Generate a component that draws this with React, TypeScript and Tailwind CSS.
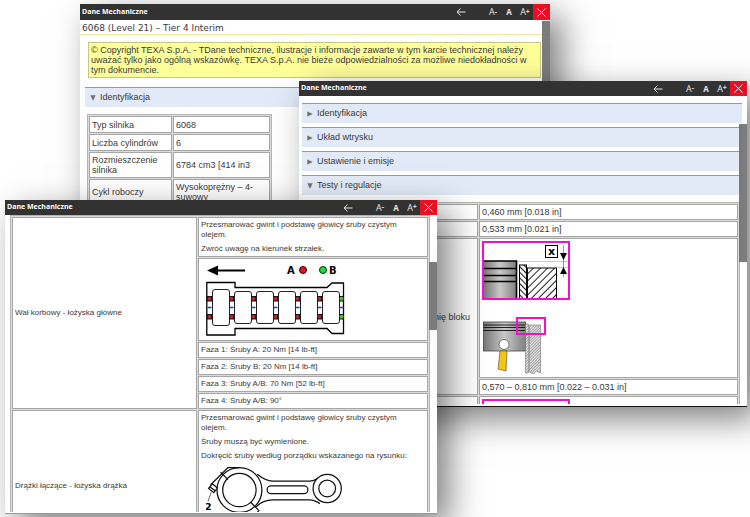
import type { ReactNode } from "react";

type WindowProps = {
  className: string;
  barClass: string;
  thumbClass: string;
  children: ReactNode;
};

const sans = "font-['Liberation_Sans',Arial,sans-serif]";
const cell = "border border-[#a6a6a6] bg-white px-[2px] py-0 text-left font-normal";
const grid = "border-separate border-spacing-[1px] border border-[#b4b4b4] bg-[#dcdcdc]";

function SizeButton({ label, mark, name }: { label: string; mark?: string; name: string }) {
  return (
    <button type="button" aria-label={name} className="flex w-4 shrink-0 items-center justify-center">
      <span className={mark ? "text-[9px]" : "text-[8px] font-bold"}>{label}</span>
      {mark && <span className="text-[7px] font-bold">{mark}</span>}
    </button>
  );
}

function AppWindow({ className, barClass, thumbClass, children }: WindowProps) {
  return (
    <section
      className={`absolute flex flex-col overflow-hidden bg-white shadow-[12px_12px_32px_rgba(0,0,0,0.5)] ${className}`}
    >
      <header className={`flex shrink-0 items-stretch bg-[#323232] font-['Open_Sans',sans-serif] text-[#e6e6e6] ${barClass}`}>
        <h2 className="flex flex-1 items-center pl-[2px] text-[7px] font-bold text-white">Dane Mechaniczne</h2>
        <button type="button" aria-label="Wstecz" className="mr-4 flex w-4 items-center justify-center">
          <svg viewBox="0 0 10 8" className="h-2 w-[10px]" fill="none" stroke="currentColor" strokeWidth="1">
            <path d="M9.5 4H1M4.500 .5 1 4l3.500 3.500" />
          </svg>
        </button>
        <SizeButton label="A" mark="-" name="Mniejszy tekst" />
        <SizeButton label="A" name="Zwykły tekst" />
        <SizeButton label="A" mark="+" name="Większy tekst" />
        <button type="button" aria-label="Zamknij" className="flex w-[17px] items-center justify-center bg-[#e81123] text-white">
          <svg viewBox="0 0 9 9" className="h-[9px] w-[9px]" fill="none" stroke="currentColor" strokeWidth="1">
            <path d="M.5 .5 8.500 8.500M8.500 .5 .5 8.500" />
          </svg>
        </button>
      </header>
      <div className={`relative min-h-0 flex-1 overflow-hidden text-[#3a3a3a] ${sans}`}>
        {children}
        <div className={`absolute right-0 w-2 bg-[#6e6e6e]/90 ${thumbClass}`} />
      </div>
    </section>
  );
}

function SectionBar({ title, open = false }: { title: string; open?: boolean }) {
  return (
    <button
      type="button"
      aria-expanded={open}
      className="flex h-5 w-full items-center gap-1 border-t border-[#9a9a9a] bg-[#e2eaf8] pl-[5px] text-left text-[9px]"
    >
      <svg viewBox="0 0 6 6" className="h-[6px] w-[6px] fill-[#6f6f6f]">
        <path d={open ? "M.3 .3h5.400L3 5.800z" : "M.3 .5 5.800 3 .3 5.500z"} />
      </svg>
      {title}
    </button>
  );
}

function IdentificationWindow() {
  const rows = [
    ["Typ silnika", "6068"],
    ["Liczba cylindrów", "6"],
    ["Rozmieszczenie silnika", "6784 cm3 [414 in3"],
    ["Cykl roboczy", "Wysokoprężny – 4-suwowy"],
  ];
  return (
    <AppWindow className="top-1 left-20 h-[240px] w-[470px]" barClass="h-4" thumbClass="top-px h-[150px]">
      <h1 className="h-[15px] border-b border-[#f3e2a0] pl-[2px] font-['DejaVu_Sans',sans-serif] text-[9px] leading-[16px]">
        6068 (Level 21) – Tier 4 Interim
      </h1>
      <p className="mt-[7px] mr-[9px] ml-2 border border-[#c5c58c] bg-[#ffff99] p-[2px] text-[9px] leading-[10px]">
        © Copyright TEXA S.p.A. - TDane techniczne, ilustracje i informacje zawarte w tym karcie technicznej należy
        uważać tylko jako ogólną wskazówkę. TEXA S.p.A. nie bieże odpowiedzialności za możliwe niedokładności w tym
        dokumencie.
      </p>
      <div className="mt-[9px] ml-[5px]">
        <SectionBar title="Identyfikacja" open />
      </div>
      <table className={`mt-[7px] ml-[7px] w-[185px] table-fixed text-[9px] leading-[10px] ${grid}`}>
        <colgroup>
          <col className="w-[83px]" />
          <col />
        </colgroup>
        <tbody>
          {rows.map(([name, value], i) => (
            <tr key={name} className={i < 2 ? "h-[17px]" : "h-[26px]"}>
              <th scope="row" className={cell}>{name}</th>
              <td className={cell}>{value}</td>
            </tr>
          ))}
        </tbody>
      </table>
    </AppWindow>
  );
}

function PistonDrawing() {
  return (
    <svg viewBox="0 0 88 134" className="block h-[134px] w-[88px]" role="img" aria-label="Tłok i blok silnika">
      <defs>
        <linearGradient id="metal" x1="0" x2="1">
          <stop offset="0" stopColor="#777" />
          <stop offset=".5" stopColor="#c9c9c9" />
          <stop offset="1" stopColor="#808080" />
        </linearGradient>
        <pattern id="hatch" width="5" height="5" patternUnits="userSpaceOnUse" patternTransform="rotate(45)">
          <rect width="5" height="5" fill="#fff" />
          <path d="M.5 0V5" stroke="#222" strokeWidth="1" />
        </pattern>
        <pattern id="hatchBack" width="4" height="4" patternUnits="userSpaceOnUse" patternTransform="rotate(-45)">
          <rect width="4" height="4" fill="#fff" />
          <path d="M.5 0V4" stroke="#222" strokeWidth="1.200" />
        </pattern>
        <pattern id="fine" width="2" height="2" patternUnits="userSpaceOnUse" patternTransform="rotate(45)">
          <rect width="2" height="2" fill="#eee" />
          <path d="M.5 0V2" stroke="#777" strokeWidth=".7" />
        </pattern>
      </defs>
      <rect x="2" y="20" width="32" height="38" fill="url(#metal)" />
      <path d="M2 20H34.500V58M2 27.500H34M2 34.500H34M2 40.500H34" fill="none" stroke="#000" strokeWidth="1.600" />
      <rect x="37.500" y="24" width="7" height="34" fill="url(#hatchBack)" stroke="#000" />
      <rect x="45.500" y="27" width="29" height="31" fill="url(#hatch)" stroke="#000" />
      <path d="M35 20.500H86M75 26.500H86" stroke="#aaa" strokeWidth=".6" />
      <rect x="63.500" y="4.500" width="12" height="12" fill="#fff" stroke="#000" />
      <text x="69.500" y="14" textAnchor="middle" fontFamily="DejaVu Sans" fontWeight="bold" fontSize="11">x</text>
      <path d="M81.500 4V36" stroke="#555" strokeWidth=".6" />
      <path d="M78 12h7l-3.500 7zM78 33h7l-3.500-7z" />
      <rect x="1" y="1" width="86" height="57" fill="none" stroke="#f20fd2" strokeWidth="2" />
      <rect x="1.500" y="81" width="42" height="29" fill="url(#metal)" stroke="#444" strokeWidth=".8" />
      <path d="M1.500 84h42M1.500 86.500h42M1.500 89.500h42" stroke="#111" strokeWidth=".9" />
      <path d="M18 110h7l-1 20-8-2z" fill="#f2c318" stroke="#5b4a10" strokeWidth=".6" />
      <circle cx="22" cy="103.500" r="5" fill="#fff" stroke="#444" strokeWidth=".7" />
      <path d="M43.500 83h3v49h-3zM47.500 84h11v48l-4-2-3 3-4-2z" fill="url(#fine)" stroke="#777" strokeWidth=".6" />
      <rect x="35" y="77" width="28" height="16" fill="none" stroke="#f20fd2" strokeWidth="2" />
    </svg>
  );
}

function TestsWindow() {
  return (
    <AppWindow
      className="top-[81px] left-[299px] h-[326px] w-[448px] border-b border-[#111]"
      barClass="h-[15px]"
      thumbClass="top-[28px] h-[138px]"
    >
      <div className="h-[308px] overflow-hidden">
        <div className="mt-[7px] mr-[5px] ml-[3px] flex flex-col gap-1">
          <SectionBar title="Identyfikacja" />
          <SectionBar title="Układ wtrysku" />
          <SectionBar title="Ustawienie i emisje" />
          <SectionBar title="Testy i regulacje" open />
        </div>
        <table className={`mt-[7px] ml-[6px] w-[435px] table-fixed text-[9px] leading-[10px] ${grid}`}>
          <colgroup>
            <col className="w-[171px]" />
            <col />
          </colgroup>
          <tbody>
            <tr className="h-4">
              <td className={cell} />
              <td className={cell}>0,460 mm [0.018 in]</td>
            </tr>
            <tr className="h-4">
              <td className={cell} />
              <td className={cell}>0,533 mm [0.021 in]</td>
            </tr>
            <tr className="h-[140px]">
              <th scope="row" rowSpan={2} className={`${cell} text-right`}>
                <span className="mr-[5px]">nię bloku</span>
              </th>
              <td className={`${cell} pt-[2px] align-top`}>
                <PistonDrawing />
              </td>
            </tr>
            <tr className="h-4">
              <td className={cell}>0,570 – 0,810 mm [0.022 – 0.031 in]</td>
            </tr>
            <tr className="h-7">
              <td className={cell} />
              <td className={`${cell} pt-[2px] align-top`}>
                <div className="h-6 w-[88px] border-2 border-[#f20fd2]" />
              </td>
            </tr>
          </tbody>
        </table>
      </div>
    </AppWindow>
  );
}

function BlockDrawing() {
  const bores = [27, 49, 71, 93, 115];
  const bolts = [3, 25, 47, 69, 91, 113, 135];
  return (
    <svg viewBox="0 0 140 74" className="ml-[5px] block h-[74px] w-[140px]" role="img" aria-label="Śruby łożysk głównych">
      <path d="M8 7.500H39" stroke="#000" strokeWidth="2" />
      <path d="M1 7.500 12 2.500v10z" />
      <g fontFamily="DejaVu Sans" fontWeight="bold" fontSize="10">
        <text x="81" y="11">A</text>
        <text x="123" y="11">B</text>
      </g>
      <circle cx="97" cy="7" r="3.500" fill="#e0141c" stroke="#300" />
      <circle cx="117" cy="7" r="3.500" fill="#19e040" stroke="#030" />
      <path
        d="M.8 19.500H29V24.500H121L126 20H137.500V70.500H126L121 65.500H29V72H.8z"
        fill="#fff"
        stroke="#000"
        strokeWidth="1.300"
      />
      <g fill="#fff" stroke="#222" strokeWidth="1">
        <rect x="6.500" y="26.500" width="17" height="36" rx="2.500" />
        {bores.map((x) => (
          <rect key={x} x={x + 1.5} y="28.500" width="17" height="32" rx="2.500" />
        ))}
      </g>
      {bolts.map((x, i) => (
        <g key={x}>
          <rect x={x - 2} y="33" width="5" height="5.500" fill="#111" />
          <rect x={x - 2} y="51" width="5" height="5.500" fill="#111" />
          <circle cx={x + 0.5} cy="35.700" r="2" fill={i === 6 ? "#4cc226" : "#b8252e"} />
          <circle cx={x + 0.5} cy="53.700" r="2" fill={i === 6 ? "#4cc226" : "#b8252e"} />
          <path d={`M${x - 1.5} 44.500h4`} stroke="#1c3fe0" strokeWidth="1.600" />
        </g>
      ))}
    </svg>
  );
}

function RodDrawing() {
  return (
    <svg viewBox="0 0 134 92" className="mt-[5px] ml-[5px] block h-[92px] w-[140px]" preserveAspectRatio="xMinYMin slice" role="img" aria-label="Korbowód">
      <g fill="none" stroke="#111" strokeWidth="1.200">
        <path d="M49 8C54 12 58 14.500 64 14.500H99C103 14.500 105 13 107 12M48 39C53 34 58 32.500 64 32.500H99C103 32.500 106 34 109 36" />
        <circle cx="32" cy="23" r="21.500" fill="#fff" />
        <circle cx="32" cy="23" r="16" />
        <circle cx="116" cy="21.500" r="13.500" fill="#fff" />
        <circle cx="116" cy="21.500" r="8" />
        <rect x="58.500" y="19" width="39" height="7.500" rx="3.700" />
        <path d="M32 1.500H21L4.500 18M14 6l7 7M43 35l7 7M51 42 44 51" />
        <path d="m6 17 5 4-3.500 4.500-5-4zM4 20l5 4" fill="#fff" />
        <path d="M5 25 2 34" strokeWidth=".6" />
      </g>
      <text x="-1" y="42" fontFamily="DejaVu Sans" fontWeight="bold" fontSize="9">2</text>
    </svg>
  );
}

function BearingsWindow() {
  const phases = [
    "Faza 1: Śruby A: 20 Nm [14 lb-ft]",
    "Faza 2: Śruby B: 20 Nm [14 lb-ft]",
    "Faza 3: Śruby A/B: 70 Nm [52 lb-ft]",
    "Faza 4: Śruby A/B: 90°",
  ];
  return (
    <AppWindow
      className="top-[200px] left-[5px] h-[314px] w-[432px] border-b border-[#999]"
      barClass="h-[15px]"
      thumbClass="top-[47px] h-[68px]"
    >
      <div className="h-[297px] overflow-hidden">
        <table className={`ml-[5px] w-[420px] table-fixed text-[8px] leading-[10px] ${grid}`}>
          <colgroup>
            <col className="w-[185px]" />
            <col />
          </colgroup>
          <tbody>
            <tr className="h-10">
              <th scope="row" rowSpan={6} className={cell}>Wał korbowy - łożyska główne</th>
              <td className={`${cell} pt-[2px] align-top`}>
                <p className="pr-4">Przesmarować gwint i podstawę głowicy śruby czystym olejem.</p>
                <p className="mt-1">Zwróć uwagę na kierunek strzałek.</p>
              </td>
            </tr>
            <tr className="h-[83px]">
              <td className={cell}>
                <BlockDrawing />
              </td>
            </tr>
            {phases.map((phase) => (
              <tr key={phase} className="h-4">
                <td className={cell}>{phase}</td>
              </tr>
            ))}
            <tr className="h-[152px]">
              <th scope="row" className={cell}>Drążki łączące - łożyska drążka</th>
              <td className={`${cell} pt-[2px] align-top`}>
                <p className="pr-4">Przesmarować gwint i podstawę głowicy śruby czystym olejem.</p>
                <p className="mt-1">Śruby muszą być wymienione.</p>
                <p className="mt-1">Dokręcić śruby według porządku wskazanego na rysunku:</p>
                <RodDrawing />
              </td>
            </tr>
          </tbody>
        </table>
      </div>
    </AppWindow>
  );
}

export default function App() {
  return (
    <main className="relative h-screen min-h-[517px] w-full overflow-hidden bg-white">
      <IdentificationWindow />
      <TestsWindow />
      <BearingsWindow />
    </main>
  );
}
